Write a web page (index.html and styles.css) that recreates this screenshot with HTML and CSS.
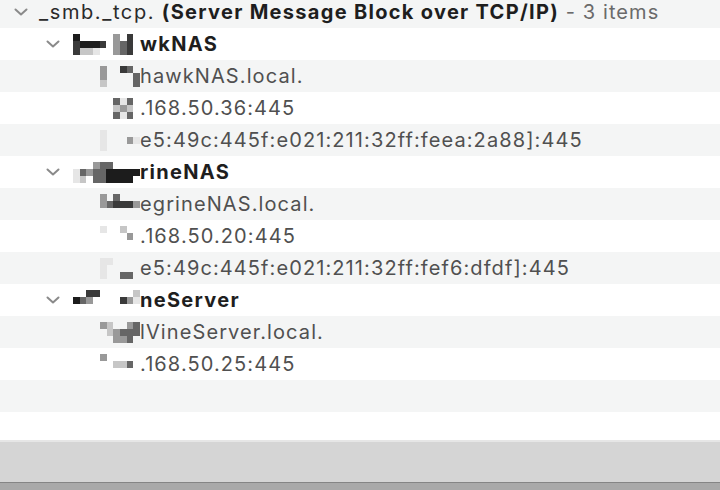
FILE: index.html
```html
<!DOCTYPE html>
<html lang="en">
<head>
    <meta charset="UTF-8">
    <title>Bonjour Browser</title>
    <link rel="stylesheet" href="styles.css">
</head>
<body>
    <div class="outline">
        <div class="rows">
            <!-- service group -->
            <div class="row lvl0">
                <svg class="chev" viewBox="0 0 14 8"><path d="M1.5 1.5 L7 6.5 L12.5 1.5"/></svg>
                <span class="svc">_smb._tcp.</span>&nbsp;<b>(Server Message Block over TCP/IP)</b>&nbsp;<span class="muted">- 3 items</span>
            </div>

            <!-- host 1 -->
            <div class="row lvl1">
                <svg class="chev" viewBox="0 0 14 8"><path d="M1.5 1.5 L7 6.5 L12.5 1.5"/></svg>
                <span class="mz w10"><i class="f"></i><i></i><i></i><i></i><i></i><i></i><i class="c"></i><i></i><i class="e"></i><i></i><i class="e"></i><i class="f"></i><i class="f"></i><i class="f"></i><i class="e"></i><i></i><i class="c"></i><i class="d"></i><i class="e"></i><i></i><i class="e"></i><i class="b"></i><i class="b"></i><i class="a"></i><i></i><i></i><i class="c"></i><i class="d"></i><i class="e"></i><i></i></span><b>wkNAS</b>
            </div>
            <div class="row lvl2">
                <span class="mz w6"><i class="c"></i><i></i><i></i><i class="e"></i><i class="d"></i><i></i><i class="c"></i><i></i><i></i><i></i><i></i><i class="d"></i><i class="b"></i><i></i><i></i><i></i><i></i><i class="d"></i></span><span class="detail">hawkNAS.local.</span>
            </div>
            <div class="row lvl2">
                <span class="mz w6"><i></i><i></i><i class="d"></i><i class="a"></i><i class="d"></i><i></i><i></i><i></i><i class="b"></i><i class="c"></i><i class="b"></i><i></i><i></i><i></i><i class="d"></i><i class="a"></i><i class="d"></i><i></i></span><span class="detail">.168.50.36:445</span>
            </div>
            <div class="row lvl2">
                <span class="mz w6"><i class="a"></i><i></i><i></i><i></i><i></i><i></i><i class="a"></i><i></i><i></i><i></i><i class="c"></i><i class="a"></i><i class="a"></i><i></i><i></i><i></i><i></i><i></i></span><span class="detail">e5:49c:445f:e021:211:32ff:feea:2a88]:445</span>
            </div>

            <!-- host 2 -->
            <div class="row lvl1">
                <svg class="chev" viewBox="0 0 14 8"><path d="M1.5 1.5 L7 6.5 L12.5 1.5"/></svg>
                <span class="mz w10"><i></i><i></i><i></i><i class="c"></i><i class="d"></i><i class="d"></i><i></i><i></i><i></i><i></i><i class="a"></i><i class="d"></i><i class="c"></i><i class="d"></i><i class="d"></i><i class="f"></i><i class="f"></i><i class="f"></i><i class="f"></i><i class="f"></i><i class="a"></i><i class="b"></i><i></i><i class="d"></i><i class="d"></i><i class="f"></i><i class="f"></i><i class="f"></i><i class="f"></i><i></i></span><b>rineNAS</b>
            </div>
            <div class="row lvl2">
                <span class="mz w6"><i class="c"></i><i></i><i class="d"></i><i></i><i></i><i></i><i class="c"></i><i class="d"></i><i class="e"></i><i class="e"></i><i class="e"></i><i class="c"></i><i></i><i></i><i></i><i></i><i></i><i></i></span><span class="detail">egrineNAS.local.</span>
            </div>
            <div class="row lvl2">
                <span class="mz w6"><i class="a"></i><i></i><i></i><i class="b"></i><i></i><i></i><i></i><i></i><i></i><i></i><i class="c"></i><i></i><i></i><i></i><i></i><i></i><i></i><i></i></span><span class="detail">.168.50.20:445</span>
            </div>
            <div class="row lvl2">
                <span class="mz w6"><i class="a"></i><i class="a"></i><i></i><i></i><i></i><i></i><i class="a"></i><i></i><i></i><i></i><i></i><i></i><i class="a"></i><i></i><i></i><i class="d"></i><i class="d"></i><i></i></span><span class="detail">e5:49c:445f:e021:211:32ff:fef6:dfdf]:445</span>
            </div>

            <!-- host 3 -->
            <div class="row lvl1">
                <svg class="chev" viewBox="0 0 14 8"><path d="M1.5 1.5 L7 6.5 L12.5 1.5"/></svg>
                <span class="mz w10"><i></i><i></i><i class="e"></i><i class="e"></i><i></i><i></i><i></i><i></i><i></i><i class="b"></i><i class="f"></i><i class="d"></i><i class="c"></i><i></i><i></i><i></i><i></i><i class="e"></i><i class="c"></i><i class="a"></i><i></i><i></i><i></i><i></i><i></i><i></i><i></i><i></i><i></i><i></i></span><b>neServer</b>
            </div>
            <div class="row lvl2">
                <span class="mz w6"><i class="c"></i><i class="b"></i><i></i><i></i><i class="c"></i><i class="d"></i><i></i><i class="b"></i><i class="c"></i><i class="d"></i><i class="d"></i><i class="d"></i><i></i><i></i><i class="c"></i><i class="c"></i><i class="d"></i><i></i></span><span class="detail">lVineServer.local.</span>
            </div>
            <div class="row lvl2">
                <span class="mz w6"><i class="c"></i><i></i><i></i><i></i><i></i><i></i><i></i><i></i><i class="b"></i><i class="b"></i><i class="d"></i><i></i><i></i><i></i><i></i><i></i><i></i><i></i></span><span class="detail">.168.50.25:445</span>
            </div>

            <div class="row"></div>
            <div class="row"></div>
        </div>
    </div>

    <div class="statusbar"></div>
    <div class="edge"></div>
</body>
</html>
```

FILE: styles.css
```css
body {
    margin: 0;
    height: 490px;
    overflow: hidden;
    display: flex;
    flex-direction: column;
    font-family: Inter, "Noto Sans", sans-serif;
    background: #ffffff;
}

.outline {
    flex: 1;
    overflow: hidden;
}

.rows {
    margin-top: -4px; /* list is scrolled a bit */
}

.row {
    height: 32px;
    display: flex;
    align-items: center;
    font-size: 20px;
    letter-spacing: 1.1px;
    color: #222222;
    white-space: nowrap;
}

.row:nth-child(odd) {
    background-color: #f4f5f5;
}

.lvl0 { padding-left: 14px; }
.lvl1 { padding-left: 46px; }
.lvl2 { padding-left: 100px; }

.chev {
    width: 14px;
    height: 8px;
    margin-right: 11px;
    fill: none;
    stroke: #8a8a8a;
    stroke-width: 2;
    stroke-linecap: round;
    stroke-linejoin: round;
}

.lvl1 .chev { margin-right: 13px; }

.svc {
    color: #2a2a2a;
    letter-spacing: 1.6px;
}

.muted { color: #6a6a6a; }

b {
    font-weight: 700;
    color: #1e1e1e;
    letter-spacing: 1.3px;
}

.detail { color: #505050; }

/* pixelated name blocks */
.mz {
    display: inline-grid;
    grid-auto-rows: 7px;
    flex: none;
}

.mz.w10 { width: 67px; grid-template-columns: repeat(10, 1fr); }
.mz.w6 { width: 40px; grid-template-columns: repeat(6, 1fr); }

.mz i { display: block; }
.mz .a { background: #e6e6e6; }
.mz .b { background: #c6c6c6; }
.mz .c { background: #999999; }
.mz .d { background: #666666; }
.mz .e { background: #3a3a3a; }
.mz .f { background: #1c1c1c; }

.statusbar {
    height: 40px;
    background-color: #d5d5d5;
    border-top: 2px solid #e6e6e6;
    border-bottom: 1px solid #858585;
}

.edge {
    height: 7px;
    background-color: #a9a9a9;
}
```
